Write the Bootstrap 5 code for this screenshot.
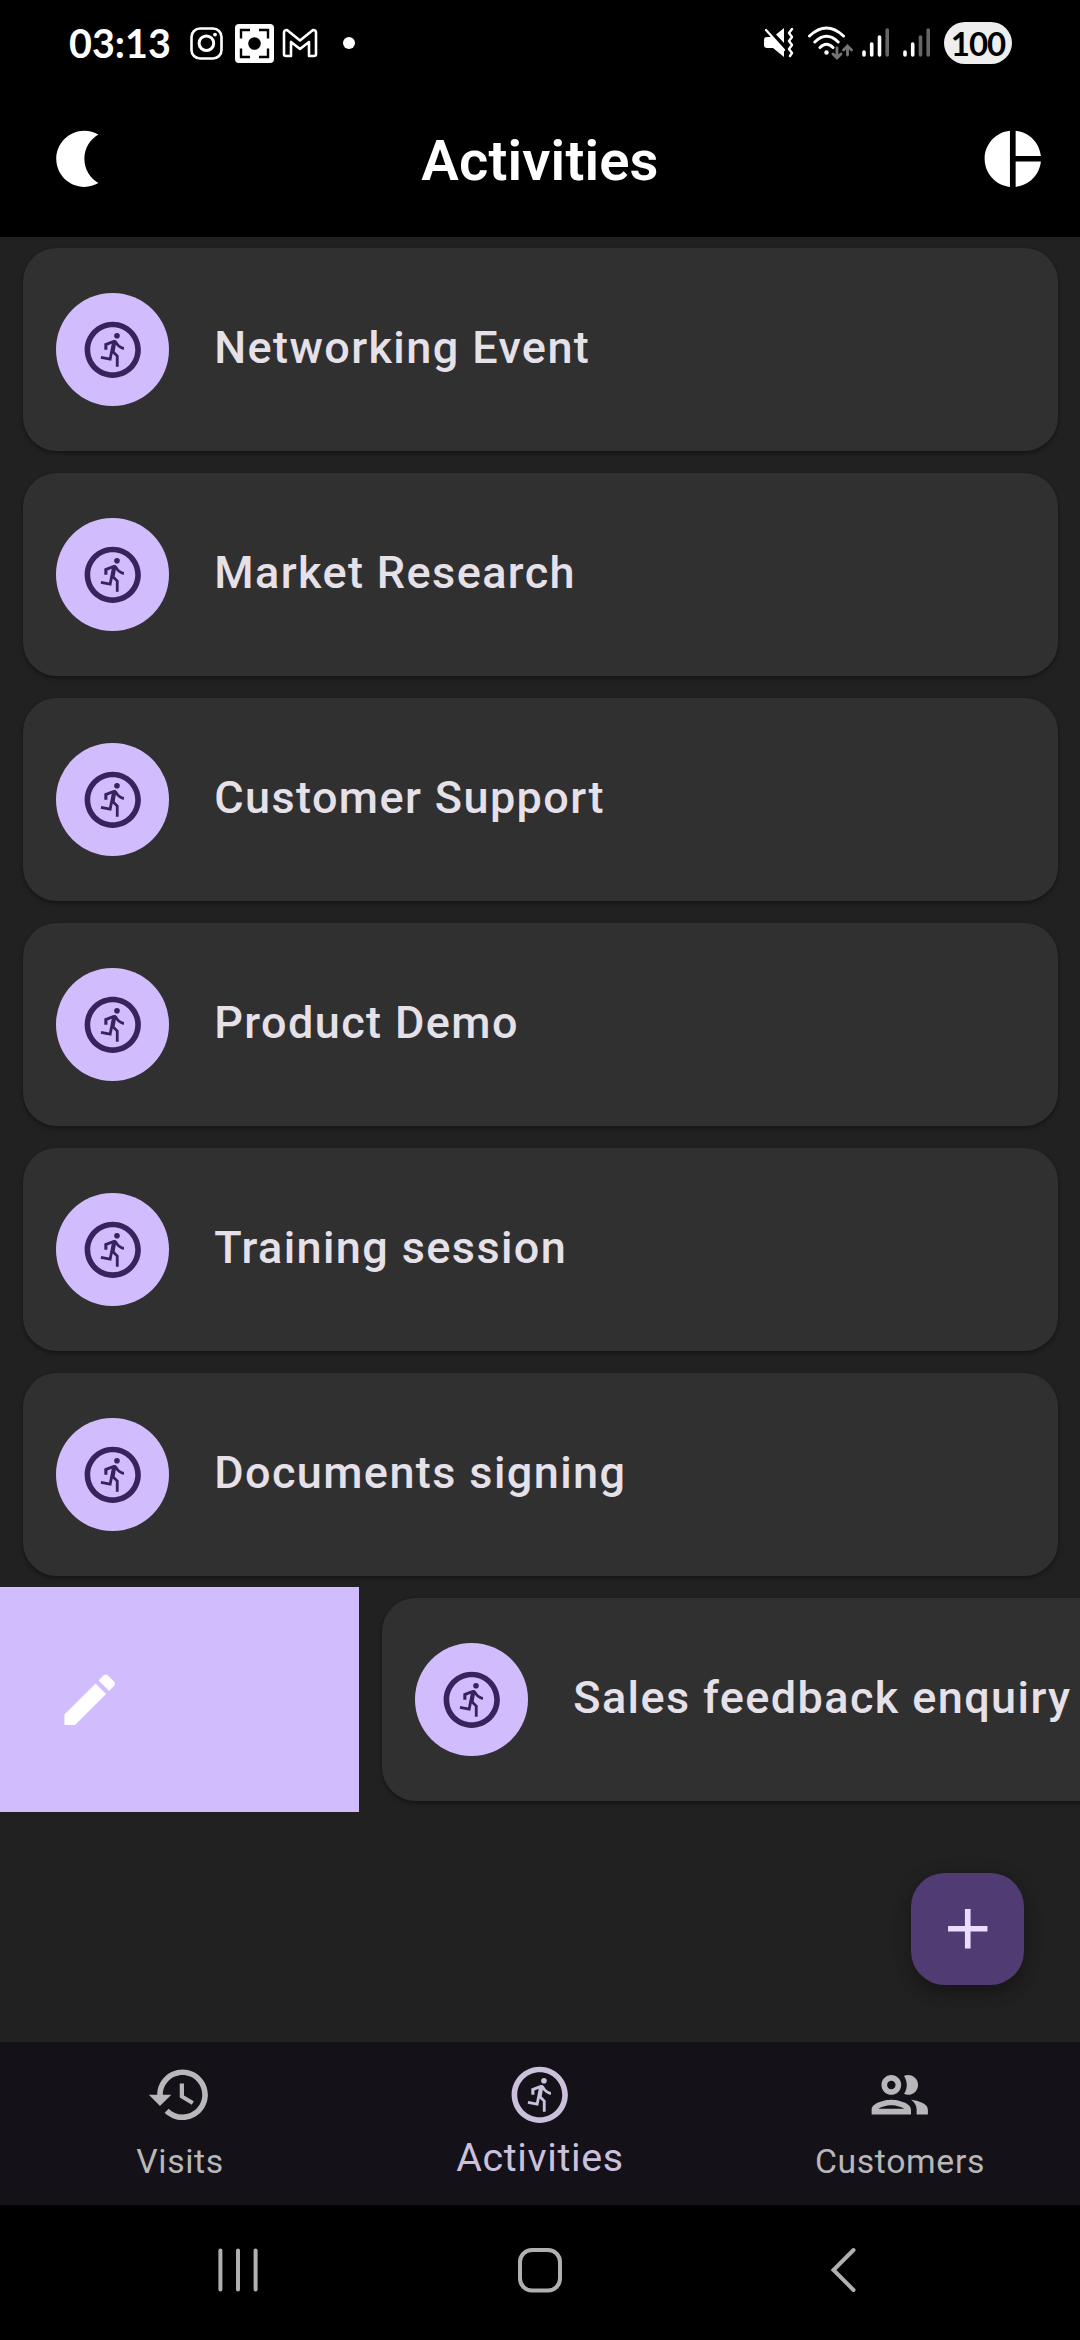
<!DOCTYPE html>
<html lang="en" data-bs-theme="dark">
<head>
<meta charset="utf-8">
<meta name="viewport" content="width=device-width, initial-scale=1">
<title>Activities</title>
<link href="https://cdn.jsdelivr.net/npm/bootstrap@5.3.0/dist/css/bootstrap.min.css" rel="stylesheet">
<style>
  body { font-family: Roboto, sans-serif; background: #000; color: #fff; }
  svg { display: block; flex: none; }
  .phone { width: 1080px; height: 2340px; background: #000; }
  .statusbar { height: 80px; padding: 6px 68px 0 69px; font-family: Lato, sans-serif; }
  .clock { font-size: 39.5px; font-weight: 700; line-height: 1; width: 121px; letter-spacing: 0; }
  .battery { width: 68px; height: 42px; margin-left: 13px; background: #eee; color: #000; font: 700 33px/42px Lato, sans-serif; letter-spacing: -1px; }
  .notif-mail { margin-left: 4px; }
  .notif-more { margin-left: 25px; }
  .sys-gap { margin-left: 13px; }
  .sys-gap-sm { margin-left: 9px; }
  .toolbar { height: 157px; padding: 0 33.75px 0 45px; }
  .toolbar h1 { font-size: 56.25px; font-weight: 600; line-height: 66px; padding: 5px 11.25px 0 0; letter-spacing: .15px; }
  .icon { width: 67.5px; height: 67.5px; fill: currentColor; }
  .screen { height: 1805px; background: #212121; }
  .item { height: 225px; padding: 11.25px 22.5px; }
  .activity { height: 202.5px; background: #303030; border: 0; border-radius: 33.75px; padding-left: 33.75px;
    gap: 45.5px; box-shadow: 0 3px 4px rgba(0,0,0,.24), 0 1px 3px rgba(0,0,0,.2); }
  .avatar { width: 112.5px; height: 112.5px; background: #d1bcfd; color: #38235d; flex: none; }
  .label { font-size: 45px; font-weight: 500; line-height: 66px; padding-bottom: 3px; color: #e6e0e9; letter-spacing: 1.4px; white-space: nowrap; }
  .swipe-action { width: 359px; height: 225px; background: #d1bcfd; padding-left: 56.25px; flex: none; }
  .swiped .activity { width: 1035px; flex: none; }
  .fab { right: 56.25px; bottom: 56.75px; width: 112.5px; height: 112.5px; border: 0; border-radius: 33.75px; background: #503c72; color: #eaddff;
    box-shadow: 0 10px 15px rgba(0,0,0,.2), 0 4px 20px rgba(0,0,0,.16); }
  .tabs { height: 163px; background: #141218; color: #b8b8ba; }
  .tabs a { color: inherit; font-size: 33.75px; line-height: 40px; letter-spacing: .65px; padding-top: 19px; gap: 13px; }
  .tabs a.current { color: #cbc1dd; font-size: 39.375px; line-height: 46px; letter-spacing: .65px; gap: 6px; }
  .sysnav { height: 135px; padding: 41px 223px 0 217px; }
  .home-key { margin-right: 8px; }
</style>
</head>
<body>
<svg width="0" height="0" class="position-absolute">
  <symbol id="run" viewBox="0 0 24 24"><path d="M12 2C6.48 2 2 6.48 2 12s4.48 10 10 10 10-4.48 10-10S17.52 2 12 2zm0 18c-4.42 0-8-3.58-8-8s3.58-8 8-8 8 3.58 8 8-3.58 8-8 8z"/><circle cx="13.5" cy="7" r="1"/><path d="M16 12c-.7 0-2.01-.54-2.91-1.76l-.41 2.35 1.42 1.42V18h-1v-3.58l-1.11-1.11-.52 2.64-3.77-.77.2-.98 2.78.57.96-4.89-1.54.57V12H9V9.77l3.28-1.21c.49-.18 1.03.06 1.26.53C14.37 10.67 15.59 11 16 11v1z"/></symbol>
</svg>
<div class="phone d-flex flex-column overflow-hidden position-relative">
  <div class="statusbar d-flex align-items-center">
    <div class="clock">03:13</div>
    <svg width="33" height="33" viewBox="0 0 33 33" fill="none" stroke="#fff" stroke-width="2.6"><rect x="1.5" y="1.5" width="30" height="30" rx="8.5"/><circle cx="16.4" cy="16.2" r="7.3" stroke-width="3"/><circle cx="25" cy="7.6" r="1.9" fill="#fff" stroke="none"/></svg>
    <svg class="ms-2 ps-1" width="47" height="39" viewBox="0 0 43 39"><rect width="39" height="39" rx="4" fill="#fff"/><circle cx="19.5" cy="19.5" r="6.3"/><path d="M6 14.5V6h9M24 6h9v8.5M33 24.5V33h-9M15 33H6v-8.5" fill="none" stroke="#000" stroke-width="2.4"/></svg>
    <svg class="notif-mail" width="36" height="30" viewBox="0 0 36 30" fill="none" stroke="#fff" stroke-width="2.6" stroke-linejoin="round"><path d="M2 26V4.5Q2 2 5 2L18 12.500 31 2Q34 2 34 4.5V26Q34 28 32 28H27V14L18 21 9 14V28H4Q2 28 2 26Z"/></svg>
    <svg class="notif-more" width="12" height="12" viewBox="0 0 12 12"><circle cx="6" cy="6" r="6" fill="#fff"/></svg>
    <svg class="ms-auto" width="30" height="30" viewBox="0 0 30 30" fill="#fff"><path d="M0 12q0-3 3-3h5l12 13v7L9 20H3q-3 0-3-3zM12 6.5L20 0v15z"/><path d="M2 2L20 22" stroke="#fff" stroke-width="2.3" stroke-linecap="round"/><path d="M28 1l-3 4 3 4-3 4 3 4-3 4 3 4-2 3" fill="none" stroke="#fff" stroke-width="2.4" stroke-linecap="round" stroke-linejoin="round"/></svg>
    <svg class="sys-gap" width="46" height="34" viewBox="0 0 46 34" fill="none" stroke="#fff" stroke-width="3" stroke-linecap="round"><path d="M2.5 10Q19.5-6 36.500 10M7.8 16Q19.5 4.5 31.200 16M13 21.5Q19.5 15 26 21.5"/><circle cx="19.5" cy="26.5" r="2.2" fill="#fff" stroke="none"/><path d="M30 22v10m-4-4l4 4 4-4M40.5 29V20m-4 4l4-4 4 4" stroke="#757575" stroke-width="2.8"/></svg>
    <svg class="sys-gap-sm" width="28" height="30" viewBox="0 0 28 30" fill="none" stroke="#fff" stroke-width="3.6" stroke-linecap="round"><path d="M2 24v3M9.7 16v11M17.5 9v18"/><path d="M25.2 2v25" stroke="#666"/></svg>
    <svg class="sys-gap" width="28" height="30" viewBox="0 0 28 30" fill="none" stroke="#fff" stroke-width="3.6" stroke-linecap="round"><path d="M2 24v3M9.7 16v11"/><path d="M17.5 9v18M25.2 2v25" stroke="#666"/></svg>
    <div class="battery rounded-pill text-center">100</div>
  </div>
  <header class="toolbar d-flex align-items-center justify-content-between">
    <svg class="icon" viewBox="0 0 24 24"><path d="M14 2c1.82 0 3.53.5 5 1.35-2.99 1.73-5 4.95-5 8.65s2.01 6.92 5 8.65c-1.47.85-3.18 1.35-5 1.35-5.52 0-10-4.48-10-10S8.48 2 14 2z"/></svg>
    <h1 class="m-0 text-center flex-grow-1">Activities</h1>
    <svg class="icon" viewBox="0 0 24 24"><path d="M11 2v20c-5.07-.5-9-4.79-9-10s3.93-9.5 9-10zm2.03 0v8.99H22c-.47-4.74-4.24-8.52-8.97-8.99zm0 11.01V22c4.74-.47 8.5-4.25 8.97-8.99h-8.97z"/></svg>
  </header>
  <main class="screen position-relative overflow-hidden">
    <div class="item"><div class="card activity flex-row align-items-center"><div class="avatar rounded-circle d-flex align-items-center justify-content-center"><svg class="icon"><use href="#run"/></svg></div><span class="label">Networking Event</span></div></div>
    <div class="item"><div class="card activity flex-row align-items-center"><div class="avatar rounded-circle d-flex align-items-center justify-content-center"><svg class="icon"><use href="#run"/></svg></div><span class="label">Market Research</span></div></div>
    <div class="item"><div class="card activity flex-row align-items-center"><div class="avatar rounded-circle d-flex align-items-center justify-content-center"><svg class="icon"><use href="#run"/></svg></div><span class="label">Customer Support</span></div></div>
    <div class="item"><div class="card activity flex-row align-items-center"><div class="avatar rounded-circle d-flex align-items-center justify-content-center"><svg class="icon"><use href="#run"/></svg></div><span class="label">Product Demo</span></div></div>
    <div class="item"><div class="card activity flex-row align-items-center"><div class="avatar rounded-circle d-flex align-items-center justify-content-center"><svg class="icon"><use href="#run"/></svg></div><span class="label">Training session</span></div></div>
    <div class="item"><div class="card activity flex-row align-items-center"><div class="avatar rounded-circle d-flex align-items-center justify-content-center"><svg class="icon"><use href="#run"/></svg></div><span class="label">Documents signing</span></div></div>
    <div class="swiped d-flex">
      <div class="swipe-action d-flex align-items-center"><svg class="icon" viewBox="0 0 24 24"><path d="M3 17.25V21h3.75L17.81 9.94l-3.75-3.75L3 17.25zM20.71 7.04c.39-.39.39-1.02 0-1.41l-2.34-2.34c-.39-.39-1.02-.39-1.41 0l-1.83 1.83 3.75 3.75 1.83-1.83z"/></svg></div>
      <div class="item flex-shrink-0"><div class="card activity flex-row align-items-center"><div class="avatar rounded-circle d-flex align-items-center justify-content-center"><svg class="icon"><use href="#run"/></svg></div><span class="label">Sales feedback enquiry</span></div></div>
    </div>
    <button class="fab position-absolute d-flex align-items-center justify-content-center p-0" aria-label="Add"><svg class="icon" viewBox="0 0 24 24"><path d="M19 13h-6v6h-2v-6H5v-2h6V5h2v6h6v2z"/></svg></button>
  </main>
  <nav class="tabs d-flex">
    <a class="col-4 d-flex flex-column align-items-center text-decoration-none"><svg class="icon" viewBox="0 0 24 24"><path d="M13 3c-4.97 0-9 4.03-9 9H1l3.89 3.89.07.14L9 12H6c0-3.87 3.13-7 7-7s7 3.13 7 7-3.13 7-7 7c-1.93 0-3.68-.79-4.94-2.06l-1.42 1.42C8.27 19.99 10.51 21 13 21c4.97 0 9-4.03 9-9s-4.03-9-9-9zm-1 5v5l4.28 2.54.72-1.21-3.5-2.08V8H12z"/></svg><span>Visits</span></a>
    <a class="current col-4 d-flex flex-column align-items-center text-decoration-none"><svg class="icon"><use href="#run"/></svg><span>Activities</span></a>
    <a class="col-4 d-flex flex-column align-items-center text-decoration-none"><svg class="icon" viewBox="0 0 24 24"><path d="M9 13.75c-2.34 0-7 1.17-7 3.5V19h14v-1.75c0-2.33-4.66-3.5-7-3.5zM4.34 17c.84-.58 2.87-1.25 4.66-1.25s3.82.67 4.66 1.25H4.34zM9 12c1.93 0 3.5-1.57 3.5-3.5S10.93 5 9 5 5.5 6.57 5.5 8.5 7.07 12 9 12zm0-5c.83 0 1.5.67 1.5 1.5S9.83 10 9 10s-1.5-.67-1.5-1.5S8.17 7 9 7zm7.04 6.81c1.16.84 1.96 1.96 1.96 3.44V19h4v-1.75c0-2.02-3.5-3.17-5.96-3.44zM15 12c1.93 0 3.5-1.57 3.5-3.5S16.93 5 15 5c-.54 0-1.04.13-1.5.35.63.89 1 1.98 1 3.15s-.37 2.26-1 3.15c.46.22.96.35 1.5.35z"/></svg><span>Customers</span></a>
  </nav>
  <div class="sysnav d-flex justify-content-between">
    <svg width="42" height="48" viewBox="0 0 42 48" stroke="#b0b0b0" stroke-width="4" stroke-linecap="round"><path d="M3.4 4.5v39M21 4.5v39M38.600 4.5v39"/></svg>
    <svg class="home-key" width="46" height="48" viewBox="0 0 46 48" fill="none" stroke="#b0b0b0" stroke-width="4"><rect x="3" y="4" width="40" height="40.5" rx="12"/></svg>
    <svg width="28" height="48" viewBox="0 0 28 48" fill="none" stroke="#b0b0b0" stroke-width="4" stroke-linecap="round"><path d="M24.5 4L4.500 24l20 20"/></svg>
  </div>
</div>
<script src="https://cdn.jsdelivr.net/npm/bootstrap@5.3.0/dist/js/bootstrap.bundle.min.js"></script>
</body>
</html>
